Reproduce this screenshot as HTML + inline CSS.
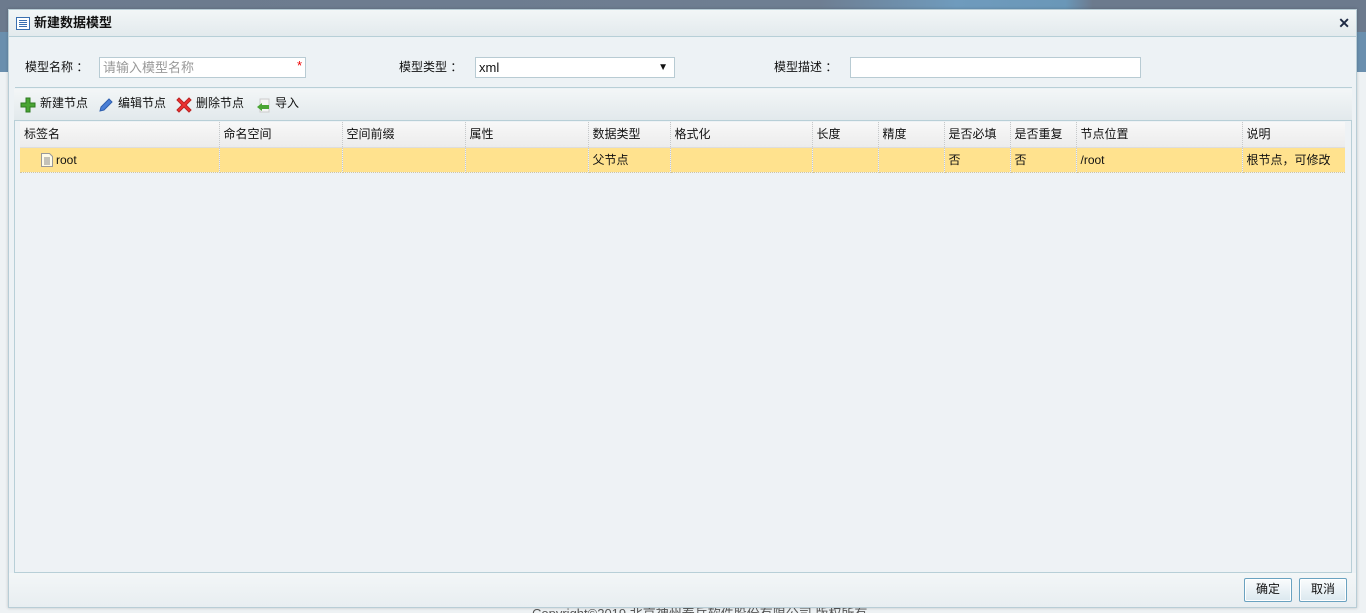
<!DOCTYPE html>
<html><head><meta charset="utf-8"><style>
*{margin:0;padding:0;box-sizing:border-box}
html,body{width:1366px;height:613px;overflow:hidden}
body{position:relative;background:#eef2f4;font-family:"Liberation Sans","Noto Sans CJK SC",sans-serif;font-size:12px;color:#111;line-height:14px}
.bg1{position:absolute;left:0;top:0;width:1366px;height:32px;background:linear-gradient(90deg,#6c7a8d 0%,#6e7e92 60%,#6f9bbd 70%,#6a97b8 78%,#6c7a8d 80%,#6c7a8d 100%)}
.bg2{position:absolute;left:0;top:32px;width:1366px;height:40px;background:#6a8fae}
.copy{position:absolute;left:532px;top:606px;font-size:13px;color:#555;line-height:15px}
.dlg{position:absolute;left:8px;top:9px;width:1349px;height:599px;background:#edf2f5;border:1px solid #b8cdd6;box-shadow:0 0 3px rgba(0,0,0,.2)}
.title{height:27px;background:linear-gradient(#f2f6f7,#e3eaed);border-bottom:1px solid #b7cfd7;position:relative}
.title span{position:absolute;left:25px;top:5px;font-size:13px;line-height:15px;font-weight:bold;color:#111}
.close{position:absolute;right:6px;top:5px;font-size:14px;line-height:16px;font-weight:bold;color:#1e2a44}
.lbl{position:absolute;top:50px;font-size:12px}
.inp{position:absolute;top:47px;height:21px;background:#fff;border:1px solid #b8cbd3;font-size:13px;line-height:15px;padding:2px 3px}
.sep{position:absolute;left:6px;top:77px;width:1337px;height:1px;background:#b8cfd7}
.tb{position:absolute;left:5px;top:79px;width:1338px;height:31px;background:linear-gradient(#f3f6f7,#e2e9ec)}
.tbi{position:absolute;top:86px;font-size:12px}
.grid{position:absolute;left:5px;top:110px;width:1338px;height:453px;border:1px solid #b8cfd7;background:#eef2f5}
table{position:absolute;left:5px;top:1px;border-collapse:collapse;table-layout:fixed}
td{height:25px;padding-left:4px;border-right:1px dotted #c8c8c8;font-size:12px;white-space:nowrap;overflow:hidden}
tr.h td{background:linear-gradient(#f8f8f8,#ececec);border-bottom:1px solid #ddd}
tr.r td{background:#ffe28e;border-bottom:1px dotted #cfc4a0}
.foot{position:absolute;left:0;top:563px;width:1347px;height:34px;background:linear-gradient(#f3f6f7,#e8eef1)}
.btn{position:absolute;top:568px;width:48px;height:24px;border:1px solid #6aa2c0;border-radius:2px;background:linear-gradient(#fafcfd,#dbe8ef);font-size:12px;text-align:center;line-height:21px;box-shadow:inset 0 0 0 1px #fff}
</style></head><body>
<div class="bg1"></div><div class="bg2"></div>
<div class="copy">Copyright©2019 北京神州泰岳软件股份有限公司 版权所有</div>
<div class="dlg">
 <div class="title">
  <svg style="position:absolute;left:7px;top:7px" width="14" height="13" viewBox="0 0 14 13"><rect x=".5" y=".5" width="13" height="12" fill="#fff" stroke="#3a6fb0"/><path d="M3 3.5h8M3 5.5h8M3 7.5h8M3 9.5h8" stroke="#3a6fb0"/></svg>
  <span>新建数据模型</span><div class="close">✕</div>
 </div>
 <div class="lbl" style="left:16px">模型名称 ：</div>
 <div class="inp" style="left:90px;width:207px;color:#999">请输入模型名称<span style="position:absolute;right:3px;top:0;color:#e00">*</span></div>
 <div class="lbl" style="left:390px">模型类型 ：</div>
 <div class="inp" style="left:466px;width:200px">xml<span style="position:absolute;right:6px;top:2px;font-size:10px">▼</span></div>
 <div class="lbl" style="left:765px">模型描述 ：</div>
 <div class="inp" style="left:841px;width:291px"></div>
 <div class="sep"></div>
 <div class="tb"></div>
 <svg style="position:absolute;left:11px;top:87px" width="16" height="16" viewBox="0 0 16 16"><path d="M6 1h4v5h5v4h-5v5H6v-5H1V6h5z" fill="#4aa534" stroke="#2e7a22"/></svg>
 <div class="tbi" style="left:31px">新建节点</div>
 <svg style="position:absolute;left:89px;top:87px" width="16" height="16" viewBox="0 0 16 16"><path d="M2 14l1-4 8-8 3 3-8 8z" fill="#4a7fd6" stroke="#2f5fae"/></svg>
 <div class="tbi" style="left:109px">编辑节点</div>
 <svg style="position:absolute;left:167px;top:87px" width="16" height="16" viewBox="0 0 16 16"><path d="M3 1l5 5 5-5 2 2-5 5 5 5-2 2-5-5-5 5-2-2 5-5-5-5z" fill="#e33" stroke="#b22"/></svg>
 <div class="tbi" style="left:187px">删除节点</div>
 <svg style="position:absolute;left:247px;top:88px" width="16" height="16" viewBox="0 0 16 16"><rect x="4" y="1" width="9" height="13" fill="#f5f5f5" stroke="#ccc"/><path d="M1 9l5-4v2h7v4H6v2z" fill="#4aa534"/></svg>
 <div class="tbi" style="left:266px">导入</div>
 <div class="grid">
  <table>
   <colgroup><col width="199"><col width="123"><col width="123"><col width="123"><col width="82"><col width="142"><col width="66"><col width="66"><col width="66"><col width="66"><col width="166"><col width="103"></colgroup>
   <tr class="h"><td>标签名</td><td>命名空间</td><td>空间前缀</td><td>属性</td><td>数据类型</td><td>格式化</td><td>长度</td><td>精度</td><td>是否必填</td><td>是否重复</td><td>节点位置</td><td style="border-right:0">说明</td></tr>
   <tr class="r"><td style="padding-left:21px"><svg style="vertical-align:-3px;margin-right:3px" width="12" height="14" viewBox="0 0 12 14"><path d="M.5.5h8l3 3v10H.5z" fill="#fffbe8" stroke="#999"/><path d="M3 5h6M3 7h6M3 9h6M3 11h6" stroke="#888"/></svg>root</td><td></td><td></td><td></td><td>父节点</td><td></td><td></td><td></td><td>否</td><td>否</td><td>/root</td><td style="border-right:0">根节点，可修改</td></tr>
  </table>
 </div>
 <div class="foot"></div>
 <div class="btn" style="left:1235px">确定</div>
 <div class="btn" style="left:1290px">取消</div>
</div>
</body></html>
